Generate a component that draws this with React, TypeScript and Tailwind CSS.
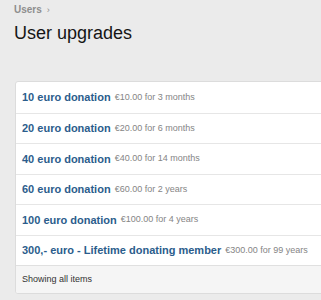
import React from "react";

const rows = [
  { title: "10 euro donation", info: "€10.00 for 3 months" },
  { title: "20 euro donation", info: "€20.00 for 6 months" },
  { title: "40 euro donation", info: "€40.00 for 14 months" },
  { title: "60 euro donation", info: "€60.00 for 2 years" },
  { title: "100 euro donation", info: "€100.00 for 4 years" },
  { title: "300,- euro - Lifetime donating member", info: "€300.00 for 99 years" },
];

export default function App() {
  return (
    <div
      className="w-[321px] h-[300px] overflow-hidden bg-[#ebebeb]"
      style={{ fontFamily: '"Liberation Sans", Arial, sans-serif' }}
    >
      <div className="pl-[14px] pt-[4px] text-[10px] font-bold text-[#8e8e8e] leading-[12px] flex items-center gap-[5px]">
        <span>Users</span>
        <span className="text-[9px] font-normal">›</span>
      </div>
      <h1 className="pl-[14px] mt-[6px] text-[18px] leading-[22px] text-[#151515] font-normal">
        User upgrades
      </h1>
      <div className="ml-[15px] mt-[37px] w-[330px] bg-white border border-[#dcdcdc] rounded-[3px] overflow-hidden">
        {rows.map((r, i) => (
          <div
            key={i}
            className={`h-[30.5px] flex items-center pl-[6px] whitespace-nowrap ${i > 0 ? "border-t border-[#e6e6e6]" : ""}`}
          >
            <span className="text-[11px] font-bold text-[#2b5d8c]">{r.title}</span>
            <span className="ml-[4px] text-[9px] text-[#858585]">{r.info}</span>
          </div>
        ))}
        <div className="h-[28px] flex items-center pl-[6px] bg-[#f5f5f5] border-t border-[#e0e0e0] text-[9px] text-[#333]">
          Showing all items
        </div>
      </div>
    </div>
  );
}
